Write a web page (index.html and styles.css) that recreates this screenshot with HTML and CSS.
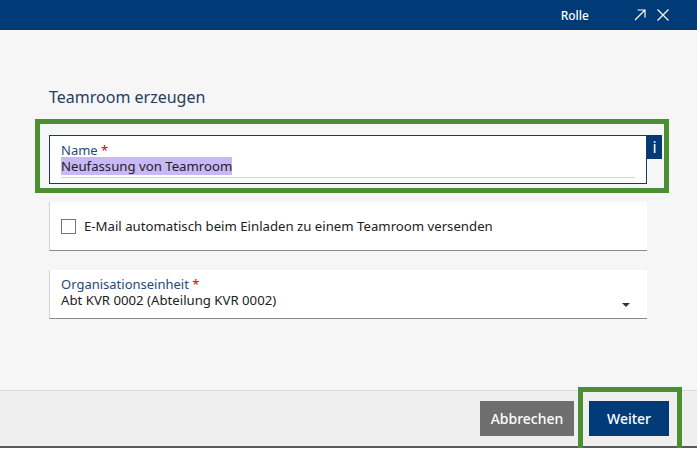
FILE: index.html
```html
<!DOCTYPE html>
<html lang="de">
<head>
<meta charset="utf-8">
<title>Teamroom erzeugen</title>
<link rel="stylesheet" href="styles.css">
</head>
<body>
<div class="dialog">
  <header class="topbar">
    <span class="role">Rolle</span>
    <svg class="icon" width="14" height="14" viewBox="0 0 14 14" aria-hidden="true">
      <path d="M2 12 L12 2 M4.5 2 H12 V9.5" fill="none" stroke="#fff" stroke-width="1.2"/>
    </svg>
    <svg class="icon" width="14" height="14" viewBox="0 0 14 14" aria-hidden="true">
      <path d="M1.5 1.5 L12.5 12.5 M12.5 1.5 L1.5 12.5" fill="none" stroke="#fff" stroke-width="1.2"/>
    </svg>
  </header>

  <main class="content">
    <h1 class="title">Teamroom erzeugen</h1>

    <div class="highlight-frame">
      <div class="field field-name">
        <label class="field-label">Name <span class="req">*</span></label>
        <div class="field-value"><span class="selected">Neufassung von Teamroom</span></div>
        <div class="field-line"></div>
      </div>
      <span class="info">i</span>
    </div>

    <div class="row check-row">
      <span class="checkbox"></span>
      <span class="check-text">E-Mail automatisch beim Einladen zu einem Teamroom versenden</span>
    </div>

    <div class="row select-row">
      <div class="select-text">
        <label class="field-label">Organisationseinheit <span class="req">*</span></label>
        <div class="field-value">Abt KVR 0002 (Abteilung KVR 0002)</div>
      </div>
      <span class="caret"></span>
    </div>
  </main>

  <footer class="footer">
    <button class="btn btn-cancel">Abbrechen</button>
    <button class="btn btn-next">Weiter</button>
    <span class="frame-next"></span>
  </footer>
</div>
</body>
</html>
```

FILE: styles.css
```css
* { box-sizing: border-box; }

html, body {
  margin: 0;
  padding: 0;
  background: #ffffff;
  font-family: "Noto Sans", "Open Sans", "Liberation Sans", sans-serif;
}

.dialog {
  width: 697px;
  height: 448px;
  display: flex;
  flex-direction: column;
  background: #f6f6f6;
  border-bottom: 2px solid #5a5a5a;
}

.topbar {
  height: 30px;
  background: #003b78;
  display: flex;
  align-items: center;
  justify-content: flex-end;
  padding-right: 27px;
  color: #fff;
}

.role {
  font-size: 12px;
  font-weight: 500;
  margin-right: 44px;
}

.icon { display: block; }
.icon + .icon { margin-left: 9px; }

.content {
  flex: 1;
  padding: 56px 28px 0 35px;
}

.title {
  margin: 0 0 11px 14px;
  font-size: 16px;
  line-height: 22px;
  font-weight: 400;
  color: #1f3f63;
}

.highlight-frame {
  width: 634px;
  border: 5px solid #4b8f33;
  padding: 11px 2px 4px 9px;
  display: flex;
  align-items: flex-start;
}

.field {
  flex: 1;
  background: #fff;
  border: 1px solid #1d3a5c;
  height: 49px;
  padding: 6px 11px 0 11px;
}

.field-label {
  display: block;
  font-size: 13px;
  line-height: 16px;
  color: #1f4a7a;
}

.req { color: #d0021b; }

.field-value {
  font-size: 13.2px;
  line-height: 16px;
  color: #222;
}

.selected { background: #c9b8f7; }

.field-line {
  height: 1px;
  background: #d6d6d6;
  margin-top: 3px;
}

.info {
  width: 15px;
  height: 24px;
  background: #003b78;
  color: #fff;
  font-size: 16px;
  line-height: 24px;
  text-align: center;
}

.row {
  width: 598px;
  margin-left: 14px;
  background: #fff;
  border-left: 1px solid #d4d4d4;
  border-bottom: 1px solid #8a8a8a;
}

.check-row {
  margin-top: 9px;
  height: 49px;
  display: flex;
  align-items: center;
  padding-left: 11px;
}

.checkbox {
  width: 15px;
  height: 15px;
  border: 1px solid #777;
  background: #fff;
  margin-right: 8px;
}

.check-text {
  font-size: 13.2px;
  color: #222;
}

.select-row {
  margin-top: 19px;
  height: 49px;
  display: flex;
  align-items: flex-start;
  padding: 6px 17px 0 11px;
}

.select-text { flex: 1; }

.caret {
  width: 0;
  height: 0;
  margin-top: 27px;
  border-left: 4px solid transparent;
  border-right: 4px solid transparent;
  border-top: 4px solid #333;
}

.footer {
  position: relative;
  height: 56px;
  background: #efefef;
  border-top: 1px solid #dadada;
  display: flex;
  align-items: center;
  justify-content: flex-end;
  padding-right: 28px;
  gap: 15px;
}

.btn {
  height: 35px;
  border: 0;
  color: #fff;
  font-family: inherit;
  font-size: 14px;
  font-weight: 500;
  padding: 0;
}

.btn-cancel { width: 94px; background: #6e6e6e; }
.btn-next { width: 80px; background: #003b78; }

.frame-next {
  position: absolute;
  left: 578px;
  top: -4px;
  width: 104px;
  height: 66px;
  border: 5px solid #4b8f33;
  pointer-events: none;
}
```
